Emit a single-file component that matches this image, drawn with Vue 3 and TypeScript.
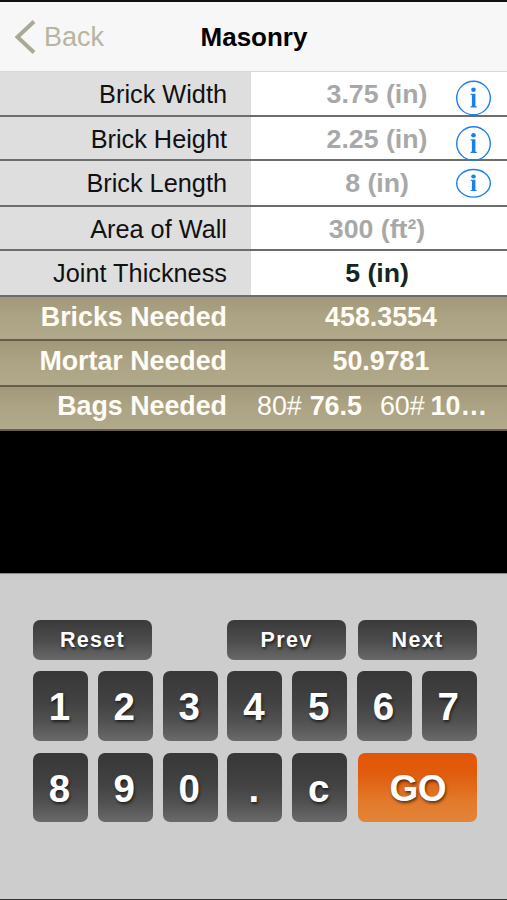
<script setup lang="ts">
interface InputRow {
  label: string
  value: string
  height: number
  active?: boolean
  info?: { cy: number; ry: number; dot: number }
}
interface ResultRow {
  label: string
  value?: string
  height: number
}

const inputs: InputRow[] = [
  { label: 'Brick Width', value: '3.75 (in)', height: 45, info: { cy: 26, ry: 16.8, dot: 1 } },
  { label: 'Brick Height', value: '2.25 (in)', height: 44, info: { cy: 26.5, ry: 16.8, dot: 1 } },
  { label: 'Brick Length', value: '8 (in)', height: 46, info: { cy: 22.3, ry: 13.8, dot: 0.83 } },
  { label: 'Area of Wall', value: '300 (ft²)', height: 44 },
  { label: 'Joint Thickness', value: '5 (in)', height: 46, active: true },
]

const results: ResultRow[] = [
  { label: 'Bricks Needed', value: '458.3554', height: 44 },
  { label: 'Mortar Needed', value: '50.9781', height: 46 },
  { label: 'Bags Needed', height: 44 },
]

const firstRow = ['1', '2', '3', '4', '5', '6', '7']
const secondRow = ['8', '9', '0', '.', 'c']
</script>

<template>
  <div class="screen">
    <header class="nav">
      <div class="back">
        <svg class="chevron" width="22" height="36" viewBox="0 0 22 36">
          <path d="M20 2.5 L3.5 18 L20 33.5" fill="none" stroke="#aaa995" stroke-width="4" />
        </svg>
        <span>Back</span>
      </div>
      <h1 class="title">Masonry</h1>
    </header>

    <div v-for="row in inputs" :key="row.label" class="row input" :style="{ height: row.height + 'px' }">
      <div class="label">{{ row.label }}</div>
      <div class="value" :class="{ active: row.active }">{{ row.value }}</div>
      <svg v-if="row.info" class="info" width="38" height="46" viewBox="0 0 38 46">
        <ellipse cx="19.5" :cy="row.info.cy" rx="16.8" :ry="row.info.ry" fill="none" stroke="#1a7ff0" stroke-width="1.4" />
        <g :transform="`translate(19.5 ${row.info.cy}) scale(1 ${row.info.dot})`" fill="#1a7ff0">
          <circle cx="0" cy="-8.2" r="2.3" />
          <path d="M-3 -4.2H1.9V8L3.3 8.4V9.4H-3V8.4L-1.6 8V-2.9L-3 -3.3Z" />
        </g>
      </svg>
    </div>

    <div v-for="row in results" :key="row.label" class="row result" :style="{ height: row.height + 'px' }">
      <div class="label">{{ row.label }}</div>
      <div v-if="row.value" class="value">{{ row.value }}</div>
      <div v-else class="bags">
        <span class="size">80#</span><b>76.5</b><span class="size second">60#</span><b>10…</b>
      </div>
    </div>

    <div class="void"></div>

    <section class="keypad">
      <div class="keys actions">
        <button class="key small">Reset</button>
        <button class="key small prev">Prev</button>
        <button class="key small">Next</button>
      </div>
      <div class="keys digits">
        <button v-for="k in firstRow" :key="k" class="key">{{ k }}</button>
      </div>
      <div class="keys digits last">
        <button v-for="k in secondRow" :key="k" class="key">{{ k }}</button>
        <button class="key go">GO</button>
      </div>
    </section>
  </div>
</template>

<style>
body {
  background: #000;
}
</style>

<style scoped>
.screen {
  width: 507px;
  height: 900px;
  display: flex;
  flex-direction: column;
  box-sizing: border-box;
  border-top: 2px solid #111;
  border-bottom: 1px solid #333;
  background: #000;
  overflow: hidden;
  font-family: 'Liberation Sans', Arial, sans-serif;
}
.nav {
  height: 70px;
  flex: none;
  box-sizing: border-box;
  border-bottom: 1px solid #d9d9d9;
  background: #f7f7f7;
  display: grid;
  grid-template-columns: 150px 208px 149px;
  align-items: center;
}
.back {
  display: flex;
  align-items: center;
  gap: 8px;
  padding-left: 14px;
  font-size: 27px;
  color: #b7b5a0;
}
.back span {
  padding-top: 1px;
}
.title {
  margin: 0;
  padding-top: 1px;
  text-align: center;
  font-size: 26px;
  font-weight: bold;
  color: #000;
}
.row {
  flex: none;
  box-sizing: border-box;
  display: grid;
  grid-template-columns: 251px 205px 51px;
  grid-template-rows: 100%;
  border-bottom: 2px solid #6d6d6d;
  white-space: nowrap;
}
.input {
  background: #fff;
  line-height: 45px;
}
.label {
  text-align: right;
  padding-right: 24px;
  font-size: 25.3px;
}
.input .label {
  background: #dedede;
  color: #111;
}
.value {
  text-align: center;
  margin-left: 47px;
  font-size: 26.7px;
  font-weight: bold;
  color: #a8a8a8;
}
.value.active {
  color: #14261e;
}
.info {
  overflow: visible;
  margin-left: -2px;
}
.result {
  background: linear-gradient(#a1977a, #aca384 45%, #b1a98b);
  border-bottom-color: #665d4e;
  line-height: 41px;
}
.result:nth-last-child(3) {
  line-height: 38px;
}
.result .label,
.result .value {
  font-size: 26.8px;
  font-weight: bold;
  color: #fffdf5;
}
.result .value {
  margin-left: 55px;
}
.bags {
  display: flex;
  padding-left: 6px;
  font-size: 26.8px;
  color: #fffdf5;
}
.size {
  margin-right: 8px;
}
.size.second {
  margin-left: 18px;
  margin-right: 6px;
}
.void {
  height: 142px;
  flex: none;
}
.keypad {
  flex: 1;
  border-top: 1px solid #888;
  background: #cdcdcd;
  padding: 46px 30px 0 33px;
}
.keys {
  display: flex;
}
.actions {
  height: 40px;
  gap: 12px;
}
.prev {
  margin-left: 63px;
}
.digits {
  height: 70px;
  margin-top: 11px;
  gap: 9.8px;
}
.last {
  height: 69px;
  margin-top: 12px;
}
.key {
  width: 55px;
  height: 100%;
  flex: none;
  padding: 2px 2px 0 0;
  border: 0;
  border-radius: 7px;
  background: linear-gradient(#373737, #424242 45%, #515151 72%, #6a6a6a);
  color: #fff;
  font: bold 38.5px 'Liberation Sans', Arial, sans-serif;
  text-shadow: 1px 2px 3px rgba(0, 0, 0, 0.6);
}
.small {
  width: 119px;
  font-size: 21.5px;
  letter-spacing: 1.3px;
  padding: 1px 0 0;
  background: linear-gradient(#3a3a3a, #4b4b4b 50%, #686868);
}
.go {
  width: 118.5px;
  margin-left: 1.5px;
  padding: 2px 0 0;
  font-size: 37px;
  letter-spacing: -0.5px;
  background: linear-gradient(#e15606, #e15c0d 30%, #e27a2b 70%, #e38438);
}
</style>
